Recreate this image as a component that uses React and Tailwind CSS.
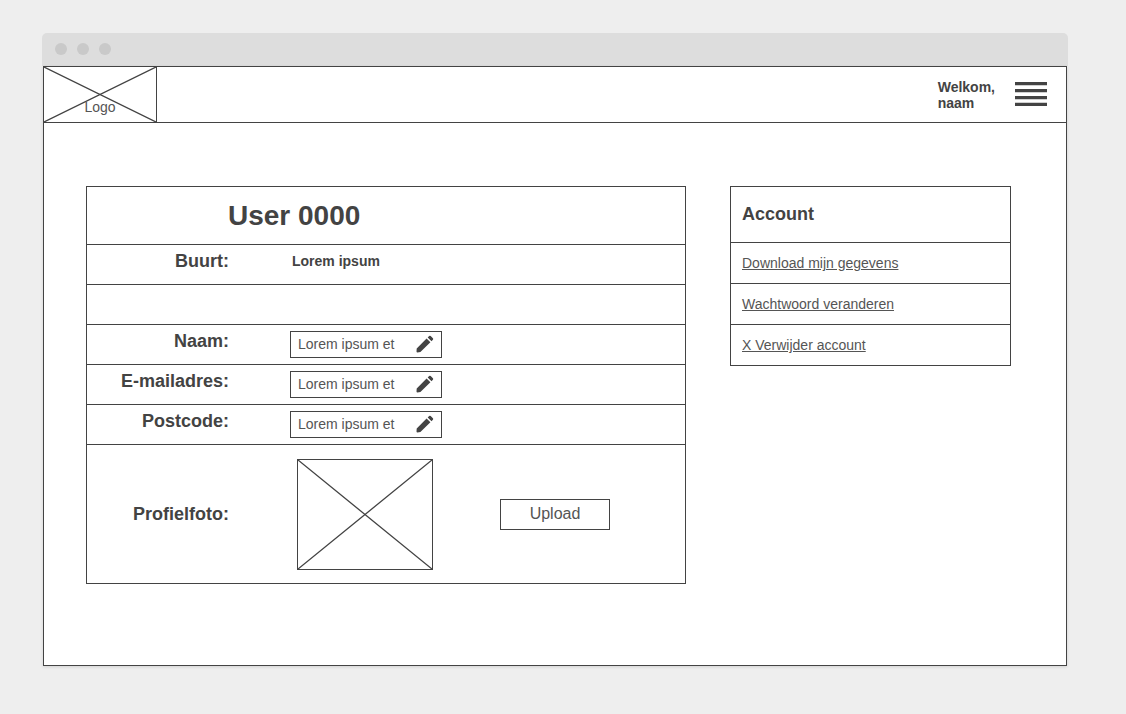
const fields = [
  { id: "naam", label: "Naam:" },
  { id: "email", label: "E-mailadres:" },
  { id: "postcode", label: "Postcode:" },
];

const accountLinks = ["Download mijn gegevens", "Wachtwoord veranderen", "X Verwijder account"];

function Cross({ className }) {
  return (
    <svg className={className} viewBox="0 0 100 100" preserveAspectRatio="none" aria-hidden="true">
      <path d="M0 0L100 100M100 0L0 100" fill="none" stroke="#434343" strokeWidth="1.3" vectorEffect="non-scaling-stroke" />
    </svg>
  );
}

function Pencil() {
  return (
    <svg className="size-[18px]" viewBox="0 0 18 18" fill="#434343" aria-hidden="true">
      <path d="M0.7 13.6L10.6 3.4L14.4 7.2L4.4 17.1L1.5 17.5Q0.5 17.5 0.5 16.5ZM11.7 2.4L13.1 1Q13.9 0.3 14.7 1L16.9 3.2Q17.6 4 16.9 4.8L15.5 6.2Z" />
    </svg>
  );
}

function TitleBar() {
  return (
    <div className="flex h-[33px] items-center gap-2.5 rounded-t-[5px] bg-[#dddddd] px-[13px] pb-0.5">
      <span className="size-3 rounded-full bg-[#c9c9c9]" />
      <span className="size-3 rounded-full bg-[#c9c9c9]" />
      <span className="size-3 rounded-full bg-[#c9c9c9]" />
    </div>
  );
}

function Header() {
  return (
    <header className="flex h-14 items-center border-b border-[#434343]">
      <a href="#" className="grid h-full w-[113px] border-r border-[#434343] text-[#555555]">
        <Cross className="col-start-1 row-start-1 h-[55px] w-full" />
        <span className="col-start-1 row-start-1 self-end justify-self-center pb-1.5 text-sm leading-[18px]">Logo</span>
      </a>
      <p className="mr-5 ml-auto text-sm leading-4 font-bold">
        Welkom,
        <br />
        naam
      </p>
      <button type="button" aria-label="Menu" className="mr-[19px] pb-0.5">
        <svg className="h-6 w-8" viewBox="0 0 32 24" fill="#434343" aria-hidden="true">
          <path d="M0 0h32v3.3H0zM0 7h32v3.3H0zM0 14h32v3.3H0zM0 20.7h32V24H0z" />
        </svg>
      </button>
    </header>
  );
}

function Profile() {
  return (
    <form className="divide-y divide-[#434343] self-start border border-[#434343]">
      <h1 className="flex h-[58px] items-center pl-[141px] text-[28px] leading-8 font-bold">User 0000</h1>
      <div className="flex h-10 items-start">
        <span className="w-[142px] text-right text-lg leading-8 font-bold">Buurt:</span>
        <span className="ml-[63px] text-sm leading-8 font-bold">Lorem ipsum</span>
      </div>
      <div className="h-10" />
      {fields.map(({ id, label }) => (
        <div key={id} className="flex h-10 items-start">
          <label htmlFor={id} className="w-[142px] text-right text-lg leading-8 font-bold">
            {label}
          </label>
          <div className="mt-1.5 ml-[61px] flex h-[27px] w-[152px] items-center border border-[#434343] px-[7px] pb-0.5">
            <input id={id} type="text" defaultValue="Lorem ipsum et" className="min-w-0 flex-1 bg-transparent text-sm leading-5 text-[#555555] outline-none" />
            <button type="button" aria-label={`${label} bewerken`}>
              <Pencil />
            </button>
          </div>
        </div>
      ))}
      <div className="flex h-[138px] items-center">
        <span className="w-[142px] text-right text-lg leading-8 font-bold">Profielfoto:</span>
        <div className="ml-[68px] h-[111px] w-[136px] border border-[#434343]">
          <Cross className="size-full" />
        </div>
        <button type="button" className="ml-[67px] h-[31px] w-[110px] border border-[#434343] text-base leading-5 text-[#555555]">
          Upload
        </button>
      </div>
    </form>
  );
}

function Account() {
  return (
    <aside className="divide-y divide-[#434343] self-start border border-[#434343]">
      <h2 className="flex h-14 items-center pb-0.5 pl-[11px] text-lg leading-6 font-bold">Account</h2>
      {accountLinks.map((text) => (
        <div key={text} className="flex h-[41px] items-center pl-[11px] text-sm leading-5 text-[#555555] last:h-10">
          <a href="#" className="underline">
            {text}
          </a>
        </div>
      ))}
    </aside>
  );
}

export default function App() {
  return (
    <div className="min-h-screen bg-[#eeeeee] pt-[33px] pr-[58px] pb-12 pl-[42px] font-['Liberation_Sans',Arial,sans-serif] text-[#434343]">
      <TitleBar />
      <div className="mx-px border border-[#434343] bg-white shadow-[0_1px_3px_rgba(0,0,0,0.12)]">
        <Header />
        <main className="grid grid-cols-[600fr_281fr] gap-11 pt-[63px] pr-[55px] pb-[81px] pl-[42px]">
          <Profile />
          <Account />
        </main>
      </div>
    </div>
  );
}
